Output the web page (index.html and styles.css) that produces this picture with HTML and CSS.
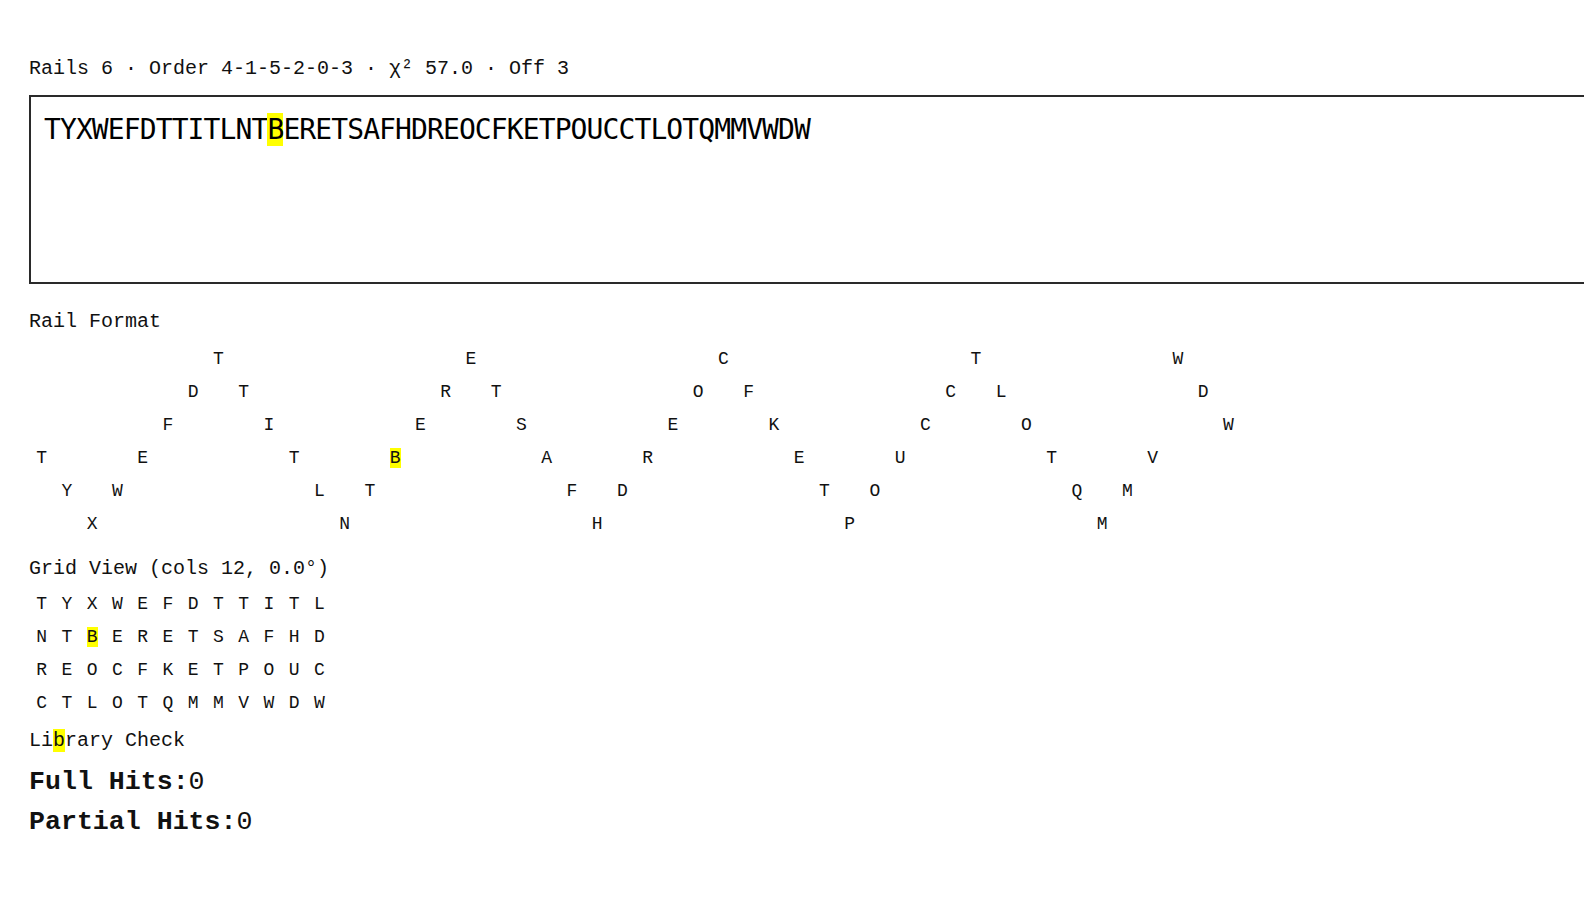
FILE: index.html
```html
<!DOCTYPE html>
<html lang="en">
<head>
<meta charset="utf-8">
<title>Rail Fence</title>
<link rel="stylesheet" href="styles.css">
</head>
<body>
<main class="page">
  <div class="status">Rails 6 · Order 4-1-5-2-0-3 · χ² 57.0 · Off 3</div>
  <div class="cipher">TYXWEFDTTITLNT<span class="hl">B</span>ERETSAFHDREOCFKETPOUCCTLOTQMMVWDW</div>

  <div class="label rail-label">Rail Format</div>
  <div class="rails">
    <span style="grid-area:4/1">T</span>
    <span style="grid-area:5/2">Y</span>
    <span style="grid-area:6/3">X</span>
    <span style="grid-area:5/4">W</span>
    <span style="grid-area:4/5">E</span>
    <span style="grid-area:3/6">F</span>
    <span style="grid-area:2/7">D</span>
    <span style="grid-area:1/8">T</span>
    <span style="grid-area:2/9">T</span>
    <span style="grid-area:3/10">I</span>
    <span style="grid-area:4/11">T</span>
    <span style="grid-area:5/12">L</span>
    <span style="grid-area:6/13">N</span>
    <span style="grid-area:5/14">T</span>
    <span style="grid-area:4/15"><span class="hl">B</span></span>
    <span style="grid-area:3/16">E</span>
    <span style="grid-area:2/17">R</span>
    <span style="grid-area:1/18">E</span>
    <span style="grid-area:2/19">T</span>
    <span style="grid-area:3/20">S</span>
    <span style="grid-area:4/21">A</span>
    <span style="grid-area:5/22">F</span>
    <span style="grid-area:6/23">H</span>
    <span style="grid-area:5/24">D</span>
    <span style="grid-area:4/25">R</span>
    <span style="grid-area:3/26">E</span>
    <span style="grid-area:2/27">O</span>
    <span style="grid-area:1/28">C</span>
    <span style="grid-area:2/29">F</span>
    <span style="grid-area:3/30">K</span>
    <span style="grid-area:4/31">E</span>
    <span style="grid-area:5/32">T</span>
    <span style="grid-area:6/33">P</span>
    <span style="grid-area:5/34">O</span>
    <span style="grid-area:4/35">U</span>
    <span style="grid-area:3/36">C</span>
    <span style="grid-area:2/37">C</span>
    <span style="grid-area:1/38">T</span>
    <span style="grid-area:2/39">L</span>
    <span style="grid-area:3/40">O</span>
    <span style="grid-area:4/41">T</span>
    <span style="grid-area:5/42">Q</span>
    <span style="grid-area:6/43">M</span>
    <span style="grid-area:5/44">M</span>
    <span style="grid-area:4/45">V</span>
    <span style="grid-area:1/46">W</span>
    <span style="grid-area:2/47">D</span>
    <span style="grid-area:3/48">W</span>
  </div>

  <div class="label grid-label">Grid View (cols 12, 0.0°)</div>
  <div class="grid">
    <span>T</span><span>Y</span><span>X</span><span>W</span><span>E</span><span>F</span><span>D</span><span>T</span><span>T</span><span>I</span><span>T</span><span>L</span>
    <span>N</span><span>T</span><span><span class="hl">B</span></span><span>E</span><span>R</span><span>E</span><span>T</span><span>S</span><span>A</span><span>F</span><span>H</span><span>D</span>
    <span>R</span><span>E</span><span>O</span><span>C</span><span>F</span><span>K</span><span>E</span><span>T</span><span>P</span><span>O</span><span>U</span><span>C</span>
    <span>C</span><span>T</span><span>L</span><span>O</span><span>T</span><span>Q</span><span>M</span><span>M</span><span>V</span><span>W</span><span>D</span><span>W</span>
  </div>

  <div class="label lib-label">Li<span class="hl">b</span>rary Check</div>
  <div class="hits hits-first"><b>Full Hits:</b>0</div>
  <div class="hits"><b>Partial Hits:</b>0</div>
</main>
</body>
</html>
```

FILE: styles.css
```css
html, body {
  margin: 0;
  padding: 0;
  background: #ffffff;
  overflow: hidden;
}

body {
  font-family: "Liberation Mono", "DejaVu Sans Mono", monospace;
  color: #111111;
}

.page {
  padding-left: 29px;
  display: flex;
  flex-direction: column;
  align-items: flex-start;
}

.status {
  margin-top: 57px;
  font-size: 20px;
  line-height: 24px;
  white-space: pre;
}

.cipher {
  margin-top: 14px;
  box-sizing: border-box;
  width: 1620px;
  height: 189px;
  border: 2px solid #2a2a2a;
  padding: 16px 12px 16px 13px;
  font-family: "DejaVu Sans Mono", monospace;
  font-size: 28px;
  letter-spacing: -0.9px;
  color: #000000;
}

.hl {
  background: #ffff00;
}

.label {
  font-size: 20px;
  line-height: 24px;
  white-space: pre;
}

.rail-label {
  margin-top: 26px;
}

.rails {
  margin-top: 9px;
  display: grid;
  grid-template-columns: repeat(48, 25.25px);
  grid-template-rows: repeat(6, 33.1px);
  font-size: 18px;
  line-height: 33.1px;
  text-align: center;
}

.grid-label {
  margin-top: 15px;
}

.grid {
  margin-top: 7px;
  display: grid;
  grid-template-columns: repeat(12, 25.25px);
  grid-auto-rows: 33.3px;
  font-size: 18px;
  line-height: 33.3px;
  text-align: center;
}

.lib-label {
  margin-top: 8px;
}

.hits {
  font-size: 26.6px;
  line-height: 40px;
  white-space: pre;
}

.hits b {
  font-weight: bold;
}

.hits-first {
  margin-top: 9px;
}
```
